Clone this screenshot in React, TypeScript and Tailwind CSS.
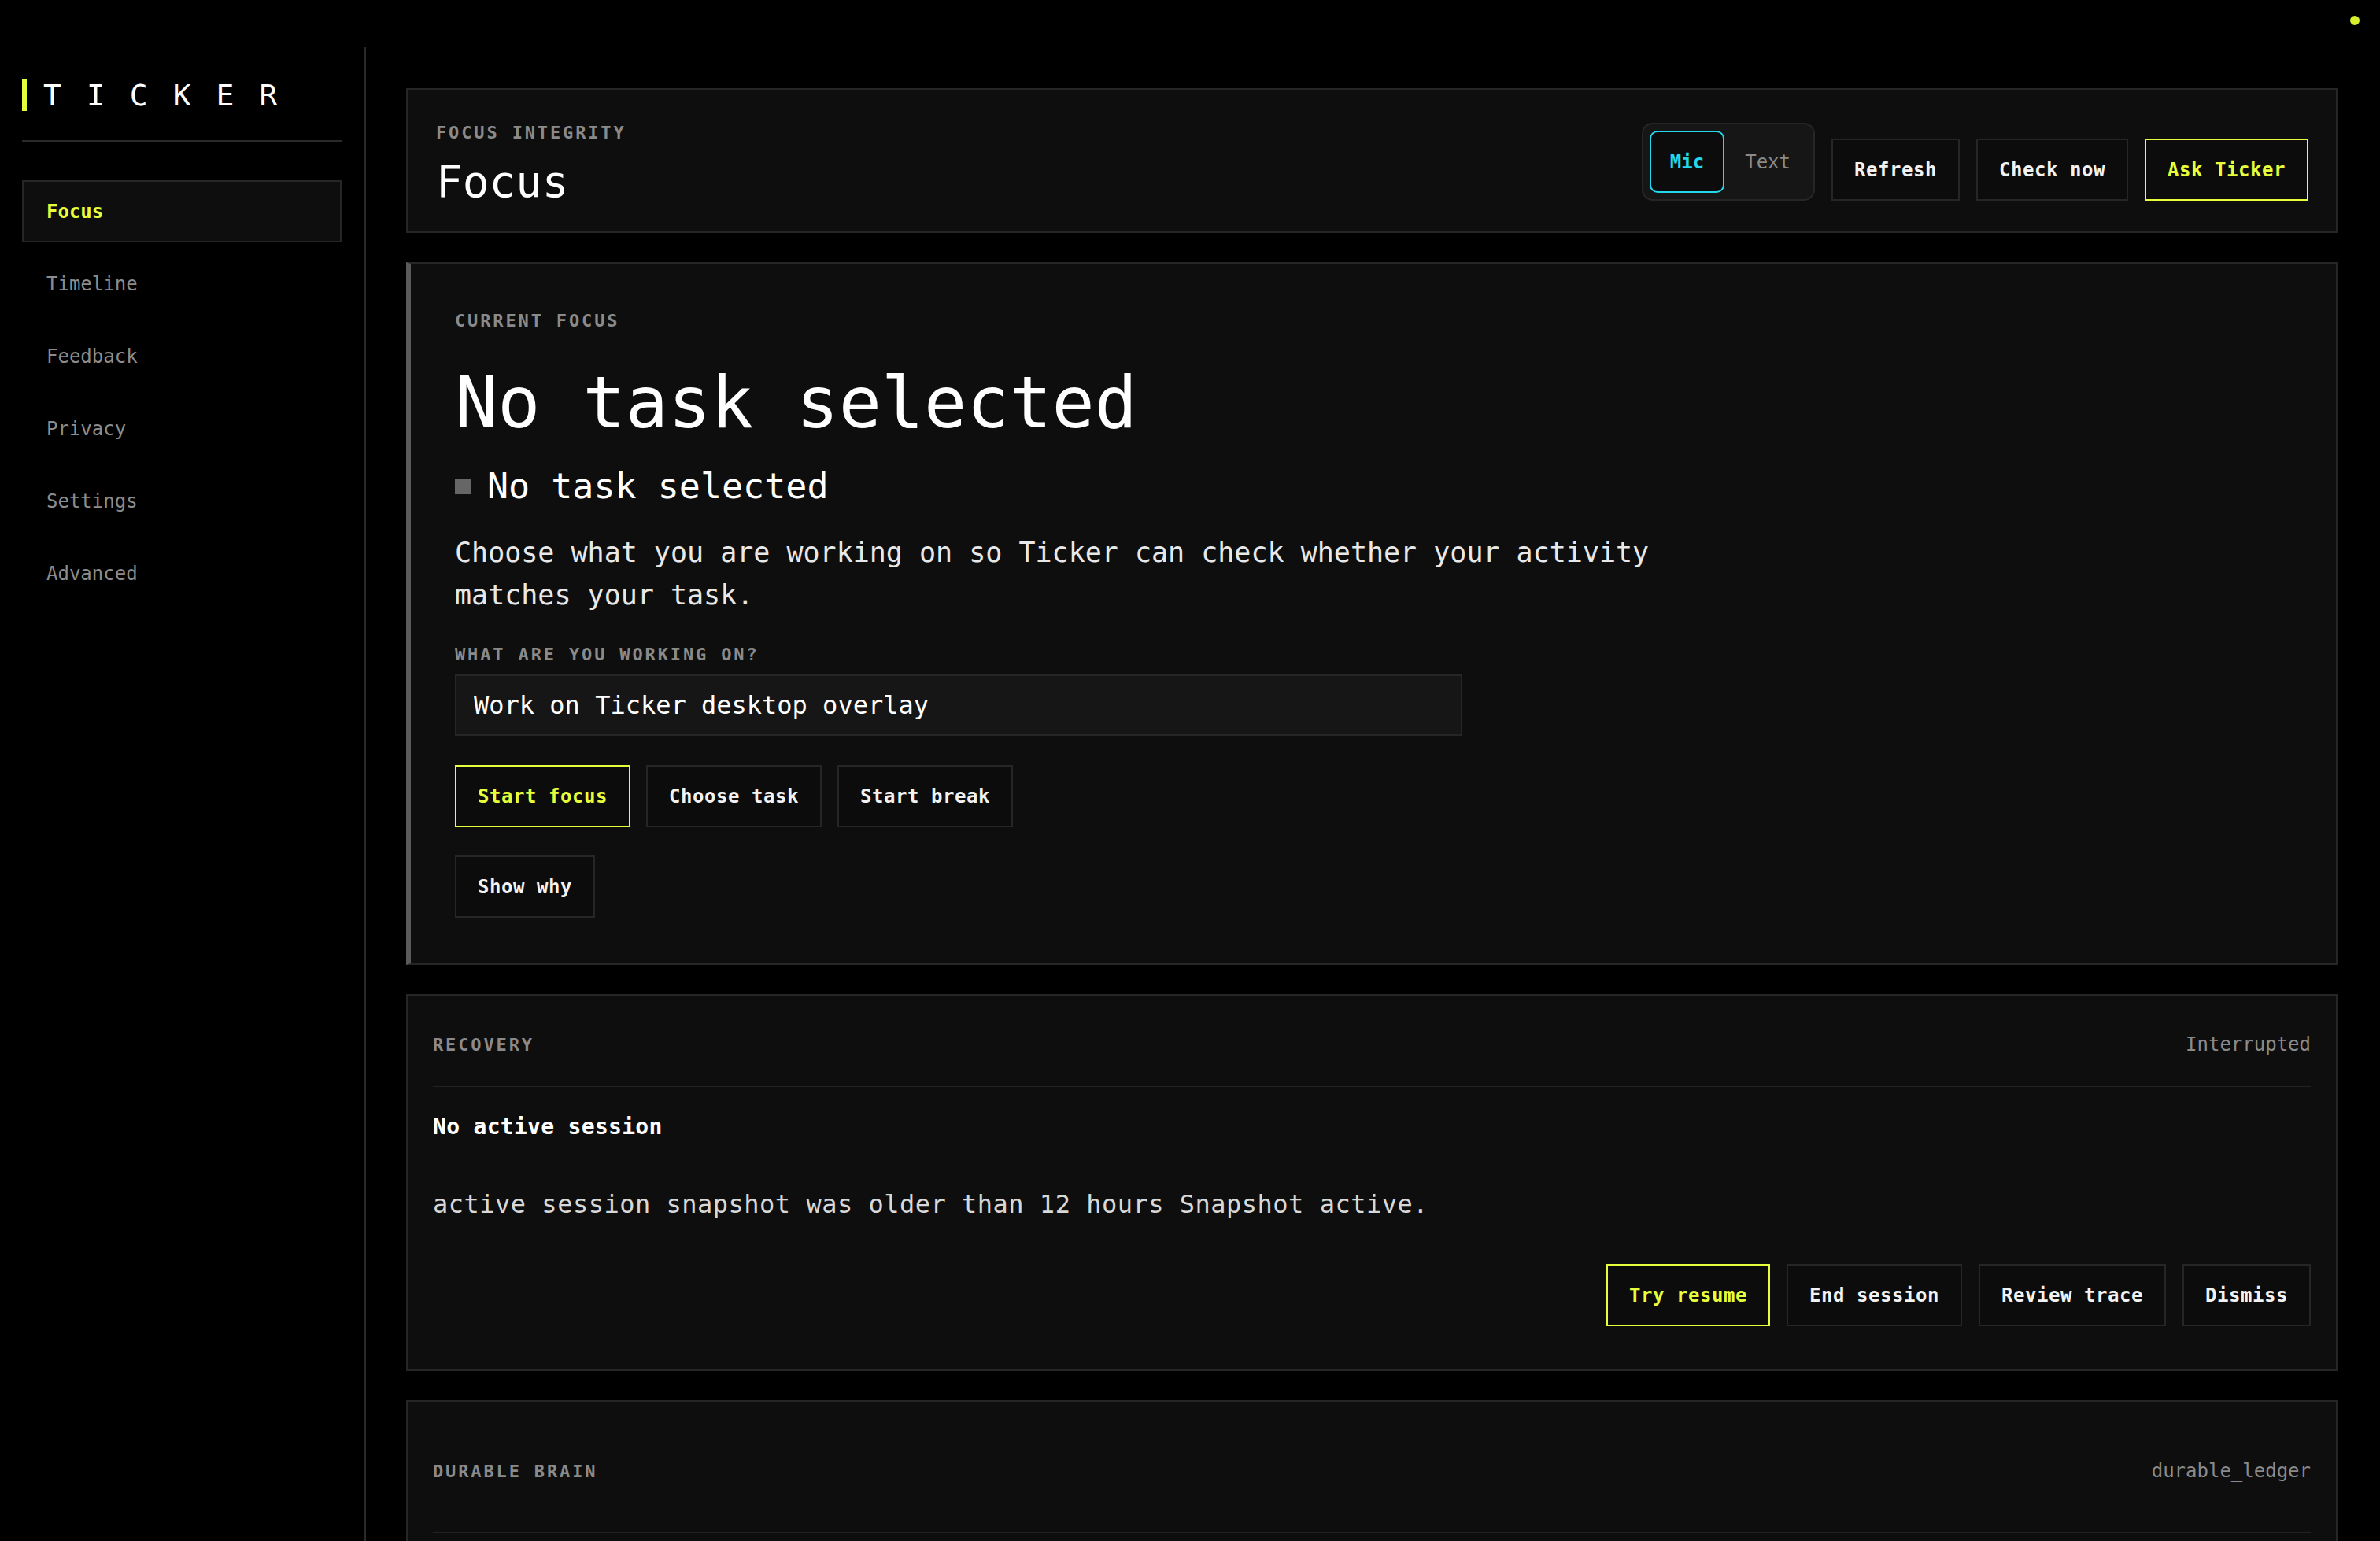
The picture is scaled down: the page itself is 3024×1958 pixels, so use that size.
import { useState } from 'react'

const NAV = ['Focus', 'Timeline', 'Feedback', 'Privacy', 'Settings', 'Advanced']

function Label({ children }: { children: string }) {
  return (
    <div className="text-[22px] leading-[33px] tracking-[0.13em] text-[#8a8a8a] font-semibold uppercase">
      {children}
    </div>
  )
}

function Btn({ children, primary = false }: { children: string; primary?: boolean }) {
  return (
    <button
      className={
        primary
          ? 'h-[79px] px-[27px] border-2 border-[#e6ff3a] bg-[#0c0c0c] text-[24px] tracking-[0.55px] font-semibold text-[#e6ff3a] whitespace-nowrap'
          : 'h-[79px] px-[27px] border-2 border-[#262626] bg-[#0c0c0c] text-[24px] tracking-[0.55px] font-semibold text-[#f2f2f2] whitespace-nowrap'
      }
    >
      {children}
    </button>
  )
}

export default function App() {
  const [mode, setMode] = useState<'mic' | 'text'>('mic')
  const [task, setTask] = useState('Work on Ticker desktop overlay')

  return (
    <div className="relative h-screen overflow-hidden bg-black font-['DejaVu_Sans_Mono','Liberation_Mono',monospace] text-white">
      <span className="absolute top-[20px] right-[26px] w-3 h-3 rounded-full bg-[#d8ef2c]" />

      <div className="flex h-full pt-[60px]">
        {/* sidebar */}
        <aside className="w-[465px] shrink-0 border-r-2 border-[#2a2a2a] pl-[28px] pr-[29px] pt-[41px]">
          <div className="flex items-center gap-[21px] border-b-2 border-[#2a2a2a] pb-[37px]">
            <span className="w-[6px] h-10 bg-[#e6ff3a]" />
            <span className="text-[38px] leading-none tracking-[32px] text-white">TICKER</span>
          </div>

          <nav className="mt-[49px] flex flex-col gap-[13px]">
            {NAV.map((n) =>
              n === 'Focus' ? (
                <div
                  key={n}
                  className="h-[79px] flex items-center px-[29px] border-2 border-[#262626] bg-[#0e0e0e] text-[24px] font-semibold text-[#e6ff3a]"
                >
                  {n}
                </div>
              ) : (
                <div key={n} className="h-[79px] flex items-center px-[29px] border-2 border-transparent text-[24px] text-[#8c8c8c]">
                  {n}
                </div>
              )
            )}
          </nav>
        </aside>

        {/* main */}
        <main className="flex-1 min-w-0 overflow-hidden pl-[51px] pr-[54px] pt-[52px] flex flex-col gap-[37px]">
          {/* header */}
          <section className="flex items-center justify-between border-2 border-[#262626] bg-[#0e0e0e] pl-[36px] pr-[35px] pt-[38px] pb-[35px]">
            <div>
              <Label>Focus integrity</Label>
              <h1 className="mt-[18px] text-[56px] leading-none text-white">Focus</h1>
            </div>
            <div className="flex items-end gap-[21px]">
              <div className="flex rounded-[14px] border-2 border-[#262626] bg-[#161616] py-[8px] pl-[8px] pr-[3px]">
                <button
                  onClick={() => setMode('mic')}
                  className={
                    mode === 'mic'
                      ? 'h-[79px] px-[24px] rounded-[10px] border-2 border-[#22d8ec] bg-[#0c0c0c] text-[24px] font-semibold text-[#22d8ec]'
                      : 'h-[79px] px-[24px] rounded-[10px] border-2 border-transparent text-[24px] text-[#8a8a8a]'
                  }
                >
                  Mic
                </button>
                <button
                  onClick={() => setMode('text')}
                  className={
                    mode === 'text'
                      ? 'h-[79px] px-[24px] rounded-[10px] border-2 border-[#22d8ec] bg-[#0c0c0c] text-[24px] font-semibold text-[#22d8ec]'
                      : 'h-[79px] px-[24px] rounded-[10px] border-2 border-transparent text-[24px] text-[#8a8a8a]'
                  }
                >
                  Text
                </button>
              </div>
              <Btn>Refresh</Btn>
              <Btn>Check now</Btn>
              <Btn primary>Ask Ticker</Btn>
            </div>
          </section>

          {/* current focus */}
          <section className="shrink-0 border-2 border-l-[6px] border-[#262626] border-l-[#5a5a5a] bg-[#0e0e0e] pl-[56px] pr-[56px] pt-[56px] pb-[58px]">
            <Label>Current focus</Label>
            <h2 className="mt-[34px] text-[90px] leading-[108px] text-white">No task selected</h2>
            <div className="mt-[23px] flex items-center gap-[21px]">
              <span className="w-5 h-5 bg-[#666666]" />
              <span className="text-[45px] leading-[58px] text-white">No task selected</span>
            </div>
            <p className="mt-[28px] max-w-[1600px] text-[35px] leading-[54px] text-[#e8e8e8]">
              Choose what you are working on so Ticker can check whether your activity matches your task.
            </p>
            <div className="mt-[32px]">
              <Label>What are you working on?</Label>
            </div>
            <input
              value={task}
              onChange={(e) => setTask(e.target.value)}
              className="mt-[9px] block w-[1280px] h-[78px] px-[22px] border-2 border-[#262626] bg-[#161616] text-[32px] text-white outline-none"
            />
            <div className="mt-[37px] flex gap-[20px]">
              <Btn primary>Start focus</Btn>
              <Btn>Choose task</Btn>
              <Btn>Start break</Btn>
            </div>
            <div className="mt-[36px]">
              <Btn>Show why</Btn>
            </div>
          </section>

          {/* recovery */}
          <section className="shrink-0 border-2 border-[#262626] bg-[#0e0e0e] px-[32px] pt-[44px] pb-[55px]">
            <div className="flex items-center justify-between h-[36px]">
              <Label>Recovery</Label>
              <span className="text-[24px] leading-[36px] text-[#8a8a8a]">Interrupted</span>
            </div>
            <div className="mt-[35px] h-px bg-[#222222]" />
            <div className="mt-[30px] text-[28px] leading-[42px] font-semibold tracking-[0.3px] text-white">No active session</div>
            <p className="mt-[53px] text-[32px] leading-[48px] tracking-[0.5px] text-[#d8d8d8]">
              active session snapshot was older than 12 hours Snapshot active.
            </p>
            <div className="mt-[52px] flex justify-end gap-[21px]">
              <Btn primary>Try resume</Btn>
              <Btn>End session</Btn>
              <Btn>Review trace</Btn>
              <Btn>Dismiss</Btn>
            </div>
          </section>

          {/* durable brain */}
          <section className="shrink-0 min-h-[400px] border-2 border-[#262626] bg-[#0e0e0e] px-[32px] pt-[70px] pb-[55px]">
            <div className="flex items-center justify-between h-[36px]">
              <Label>Durable brain</Label>
              <span className="text-[24px] leading-[36px] text-[#8a8a8a]">durable_ledger</span>
            </div>
            <div className="mt-[60px] h-px bg-[#222222]" />
          </section>
        </main>
      </div>
    </div>
  )
}
